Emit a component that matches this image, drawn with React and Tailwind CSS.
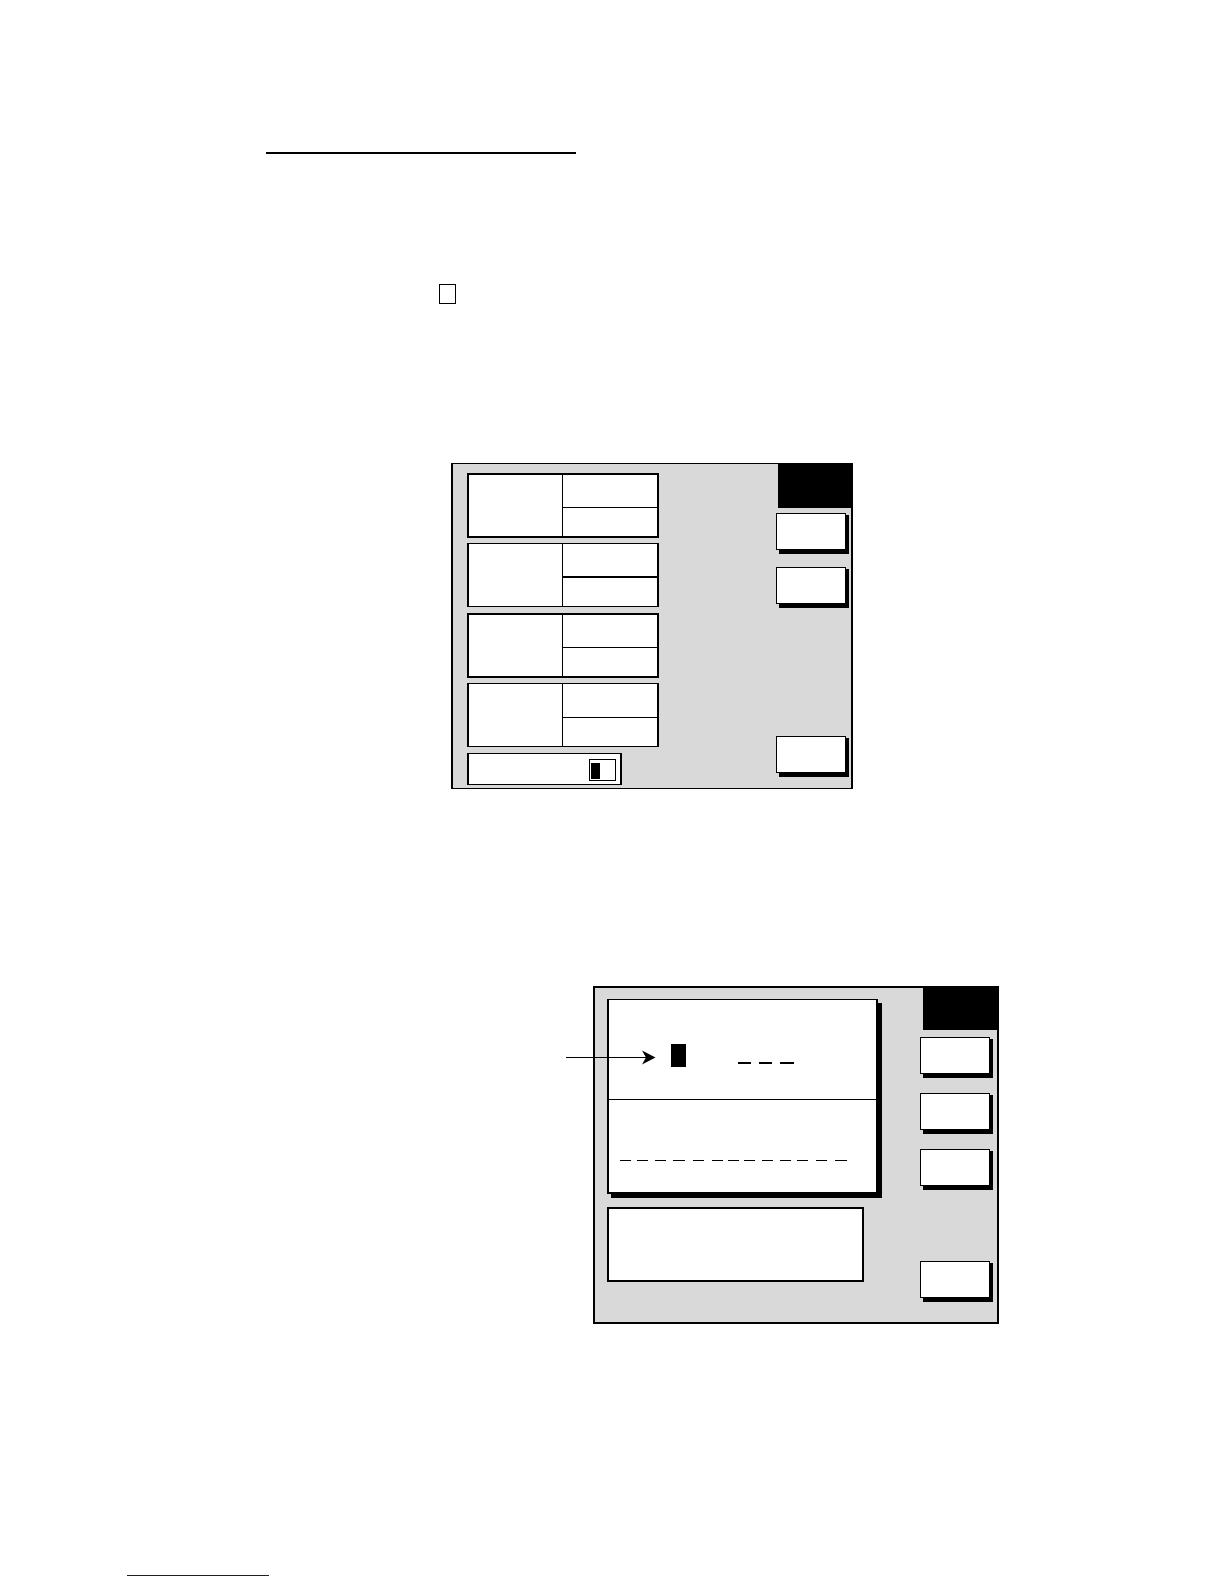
import React from "react";

const channels = [
  { id: 1, style: "h-[65px] border-2", split: "h-8 border-b" },
  { id: 2, style: "h-16 border-x-2 border-y", split: "h-8 border-b-2" },
  { id: 3, style: "h-[65px] border-2", split: "h-8 border-b" },
  { id: 4, style: "h-16 border-x-2 border-y", split: "h-[33px] border-b" },
];

function SoftKey({ label }) {
  return (
    <button
      type="button"
      aria-label={label}
      className="h-[37px] w-[70px] shrink-0 border border-black bg-white shadow-[3px_2px_0_0_#000,3px_4px_0_0_#000]"
    />
  );
}

function ChannelBox({ style, split }) {
  return (
    <div className={`flex w-48 border-black bg-white ${style}`}>
      <div className="w-[93px]" />
      <div className="flex flex-1 flex-col border-l border-black">
        <div className={`box-content border-black ${split}`} />
        <div className="flex-1" />
      </div>
    </div>
  );
}

function MenuScreen() {
  return (
    <section className="ml-[451px] flex h-[326px] max-w-[402px] border-x-2 border-y border-black bg-[#d9d9d9]">
      <div className="grid flex-1 auto-rows-[70px] content-start pt-[9px] pl-[14px]">
        {channels.map((channel) => (
          <ChannelBox
            key={channel.id}
            style={channel.style}
            split={channel.split}
          />
        ))}
        <div className="flex h-8 w-[155px] items-end justify-end border-x-2 border-y border-black bg-white pr-1 pb-[3px]">
          <label className="flex h-[22px] w-[27px] items-end border border-black pb-px pl-px">
            <span className="h-4 w-[9px] bg-black" />
            <input
              type="text"
              aria-label="Entry number"
              className="h-4 w-3 outline-none"
            />
          </label>
        </div>
      </div>
      <div className="flex w-[75px] flex-col pb-[15px]">
        <div className="h-11 w-[73px] self-end bg-black" />
        <div className="flex flex-col gap-[17px] pt-[5px]">
          <SoftKey label="Key 1" />
          <SoftKey label="Key 2" />
        </div>
        <div className="mt-auto flex">
          <SoftKey label="Key 5" />
        </div>
      </div>
    </section>
  );
}

function Arrow() {
  return (
    <svg
      className="absolute top-[62px] -left-[29px]"
      width="90"
      height="15"
      viewBox="0 0 90 15"
      aria-hidden="true"
    >
      <path d="M0 7.5H82" stroke="#000" strokeWidth="1" />
      <path d="M76 0.5L89.5 7.5L76 14.5L80 7.5Z" fill="#000" />
    </svg>
  );
}

function EntryScreen() {
  return (
    <section className="relative ml-[593px] flex h-[338px] max-w-[406px] border-2 border-black bg-[#d9d9d9]">
      <div className="flex-1 pt-[11px] pl-3">
        <div className="h-[195px] w-[271px] border-2 border-t border-black bg-white shadow-[4px_4px_0_0_#000]">
          <div className="flex h-[100px] gap-[52px] border-b border-black pt-11 pl-[62px]">
            <span className="h-[23px] w-[15px] bg-black" />
            <svg width="56" height="23" viewBox="0 0 56 23" aria-hidden="true">
              <path
                d="M0 19H13M21 19H34M42 19H56"
                stroke="#000"
                strokeWidth="2"
              />
            </svg>
          </div>
          <div className="pt-[60px] pl-[11px]">
            <svg
              className="block"
              width="227"
              height="1"
              viewBox="0 0 227 1"
              aria-hidden="true"
            >
              <path
                d="M0 .5H11M17 .5H28M35 .5H46M53 .5H65M73 .5H84M92 .5H103M108 .5H119M124 .5H135M142 .5H153M160 .5H171M177 .5H188M196 .5H207M215 .5H227"
                stroke="#000"
                strokeWidth="1"
              />
            </svg>
          </div>
        </div>
        <div className="mt-[13px] h-[75px] w-[257px] border-2 border-black bg-white" />
      </div>
      <div className="flex w-[77px] flex-col pb-6">
        <div className="h-[42px] w-[74px] self-end bg-black" />
        <div className="flex flex-col gap-[19px] pt-[7px]">
          <SoftKey label="Key 1" />
          <SoftKey label="Key 2" />
          <SoftKey label="Key 3" />
        </div>
        <div className="mt-auto flex">
          <SoftKey label="Key 5" />
        </div>
      </div>
      <Arrow />
    </section>
  );
}

function App() {
  return (
    <main className="min-h-screen bg-white pt-[152px] pb-2 font-['Liberation_Sans',sans-serif]">
      <hr className="ml-[266px] max-w-[310px] border-t-2 border-black" />
      <div className="mt-[130px] ml-[439px] h-5 w-[17px] border border-black" />
      <div className="mt-[159px]">
        <MenuScreen />
      </div>
      <div className="mt-[197px]">
        <EntryScreen />
      </div>
      <a
        href="#contents"
        aria-label="Contents"
        className="mt-[251px] ml-[127px] block h-px w-[142px] bg-[#10109a]"
      />
    </main>
  );
}

export default App;
